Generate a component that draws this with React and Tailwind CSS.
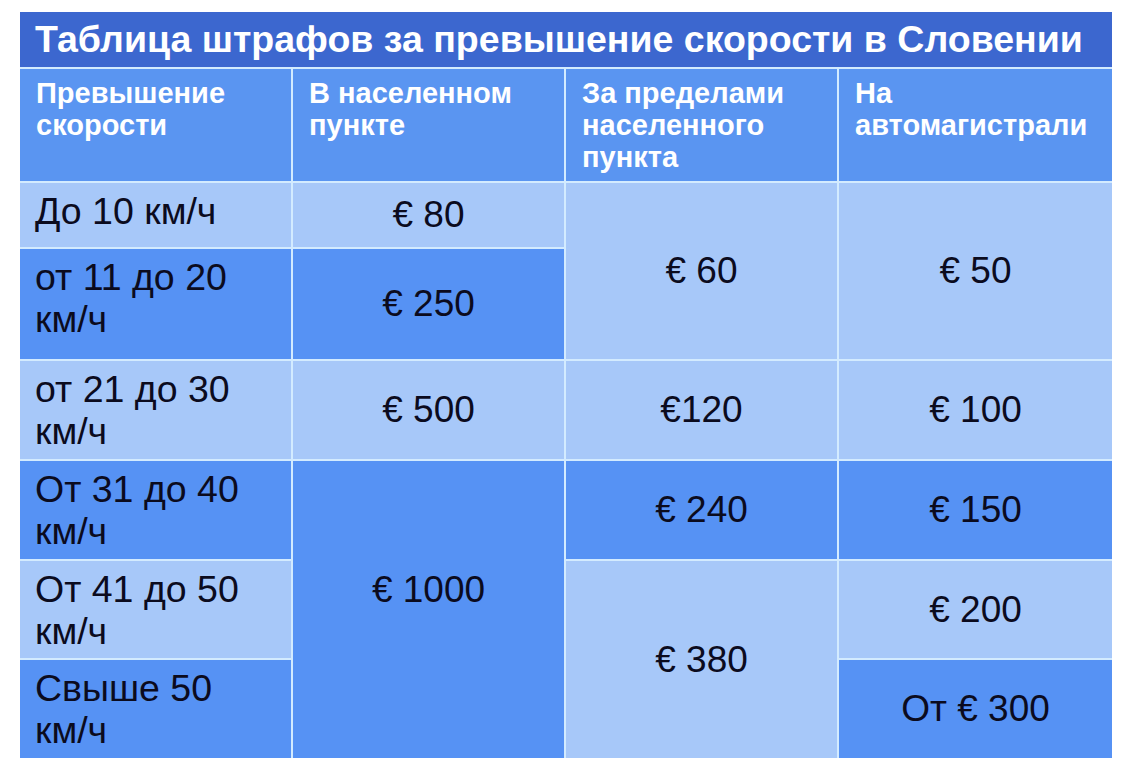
import React from "react";

const LIGHT = "bg-[#a7c8f9]";
const DARK = "bg-[#5692f4]";

function Label({ bg, lines, row }) {
  return (
    <div className={`${bg} ${row} col-start-1 px-[15px] pt-[7px] text-[37.5px] leading-[42px] text-[#0b0b1e]`}>
      {lines.map((l, i) => (
        <div key={i} className="whitespace-nowrap">{l}</div>
      ))}
    </div>
  );
}

function Val({ bg, children, cls }) {
  return (
    <div className={`${bg} ${cls} flex items-center justify-center text-[37px] leading-[42px] text-[#0b0b1e]`}>
      {children}
    </div>
  );
}

export default function App() {
  return (
    <div
      className="w-[1126px] h-[774px] bg-white pt-[12px] pl-[20px]"
      style={{ fontFamily: '"Liberation Sans", Arial, sans-serif' }}
    >
      <div className="w-[1092px] grid grid-cols-[271px_271px_271px_273px] grid-rows-[55px_112px_64px_110px_98px_98px_97px_98px] gap-[2px] bg-[#d3ebff]">
        <div className="col-span-4 bg-[#3c67cf] flex items-center px-[15px] text-white font-bold text-[37.5px] leading-none whitespace-nowrap">
          Таблица штрафов за превышение скорости в Словении
        </div>
        {[["Превышение", "скорости"], ["В населенном", "пункте"], ["За пределами", "населенного", "пункта"], ["На", "автомагистрали"]].map((h, i) => (
          <div key={i} className="bg-[#5a95f1] px-[16px] pt-[8px] text-white font-bold text-[29px] leading-[32px]">
            {h.map((l, j) => (
              <div key={j} className="whitespace-nowrap">{l}</div>
            ))}
          </div>
        ))}

        <Label bg={LIGHT} row="row-start-3" lines={["До 10 км/ч"]} />
        <Val bg={LIGHT} cls="col-start-2 row-start-3">€ 80</Val>
        <Val bg={LIGHT} cls="col-start-3 row-start-3 row-span-2">€ 60</Val>
        <Val bg={LIGHT} cls="col-start-4 row-start-3 row-span-2">€ 50</Val>

        <Label bg={DARK} row="row-start-4" lines={["от 11 до 20", "км/ч"]} />
        <Val bg={DARK} cls="col-start-2 row-start-4">€ 250</Val>

        <Label bg={LIGHT} row="row-start-5" lines={["от 21 до 30", "км/ч"]} />
        <Val bg={LIGHT} cls="col-start-2 row-start-5">€ 500</Val>
        <Val bg={LIGHT} cls="col-start-3 row-start-5">€120</Val>
        <Val bg={LIGHT} cls="col-start-4 row-start-5">€ 100</Val>

        <Label bg={DARK} row="row-start-6" lines={["От 31 до 40", "км/ч"]} />
        <Val bg={DARK} cls="col-start-2 row-start-6 row-span-3 pb-[40px]">€ 1000</Val>
        <Val bg={DARK} cls="col-start-3 row-start-6">€ 240</Val>
        <Val bg={DARK} cls="col-start-4 row-start-6">€ 150</Val>

        <Label bg={LIGHT} row="row-start-7" lines={["От 41 до 50", "км/ч"]} />
        <Val bg={LIGHT} cls="col-start-3 row-start-7 row-span-2">€ 380</Val>
        <Val bg={LIGHT} cls="col-start-4 row-start-7">€ 200</Val>

        <Label bg={DARK} row="row-start-8" lines={["Свыше 50", "км/ч"]} />
        <Val bg={DARK} cls="col-start-4 row-start-8">От € 300</Val>
      </div>
    </div>
  );
}
